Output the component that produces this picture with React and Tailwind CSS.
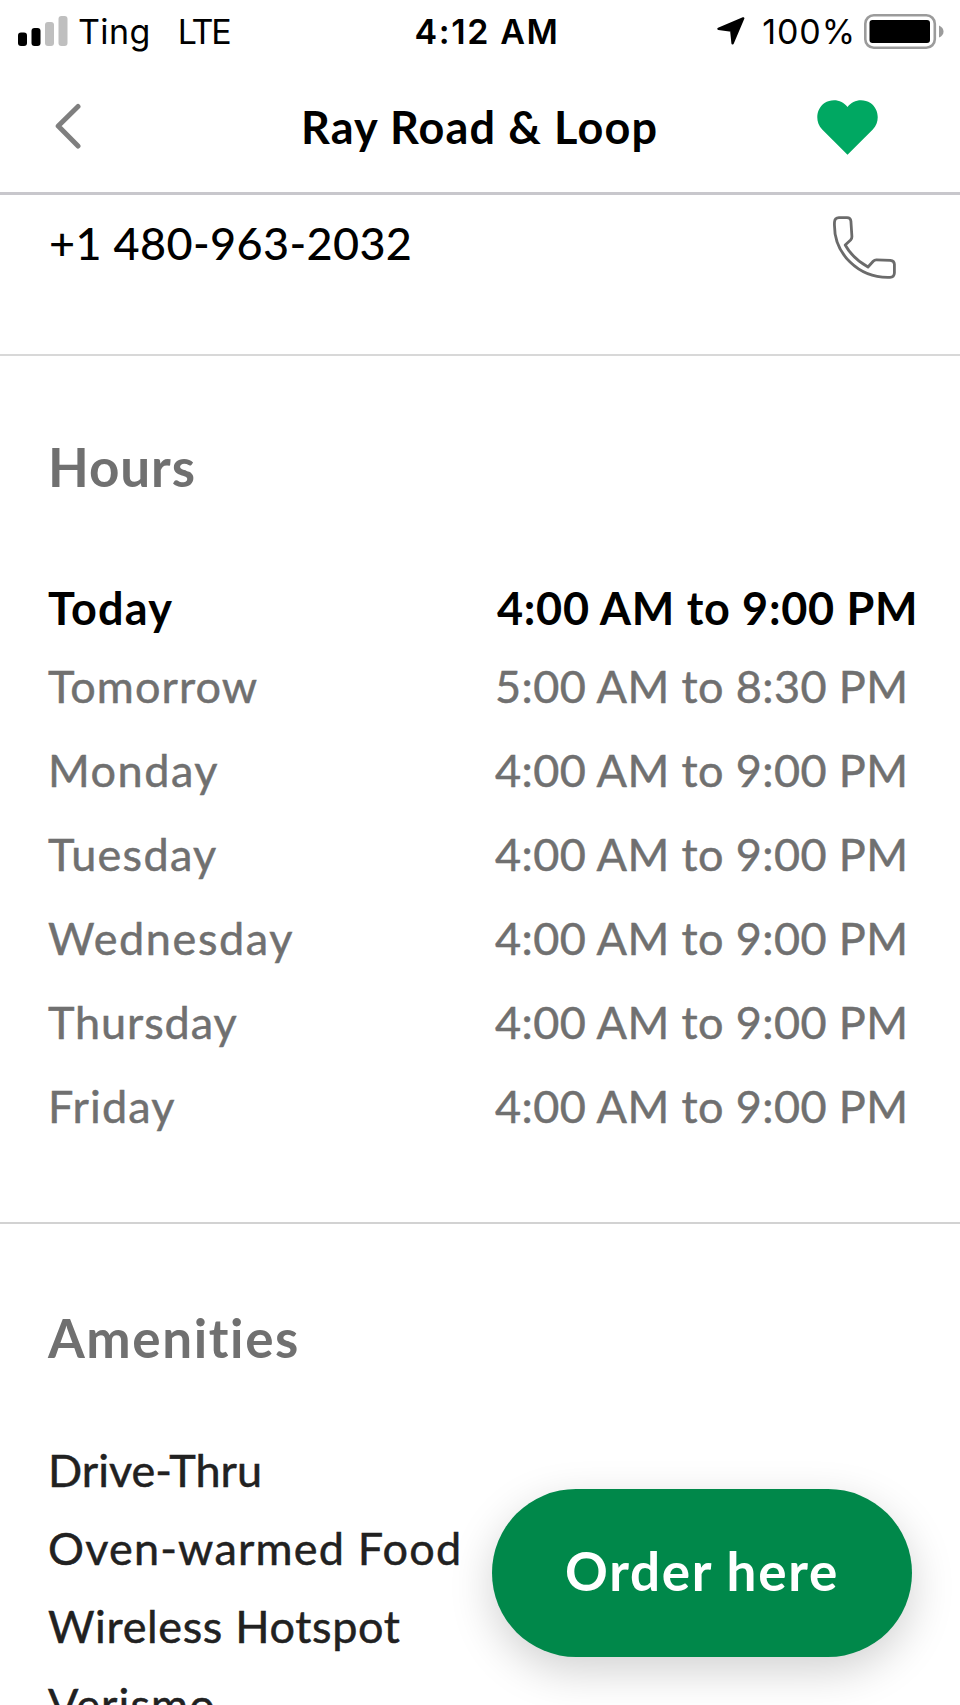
// src/App.jsx
import React from 'react';

const hours = [
  { day: 'Tomorrow', time: '5:00 AM to 8:30 PM', tracking: 'tracking-[1.1px]' },
  { day: 'Monday', time: '4:00 AM to 9:00 PM', tracking: 'tracking-[1.5px]' },
  { day: 'Tuesday', time: '4:00 AM to 9:00 PM', tracking: 'tracking-[1.3px]' },
  { day: 'Wednesday', time: '4:00 AM to 9:00 PM', tracking: 'tracking-[1.6px]' },
  { day: 'Thursday', time: '4:00 AM to 9:00 PM', tracking: 'tracking-[0.9px]' },
  { day: 'Friday', time: '4:00 AM to 9:00 PM', tracking: 'tracking-[1.1px]' },
];

const amenities = [
  { name: 'Drive-Thru', tracking: 'tracking-normal' },
  { name: 'Oven-warmed Food', tracking: 'tracking-[1.2px]' },
  { name: 'Wireless Hotspot', tracking: 'tracking-[0.65px]' },
  { name: 'Verismo', tracking: 'tracking-[1.1px]' },
];

function StatusBar() {
  return (
    <div className="grid h-[62px] grid-cols-3 items-center pl-[18px] pr-[16px] font-['Inter',sans-serif] text-[34px] leading-none text-black">
      <div className="flex items-center whitespace-nowrap">
        <svg className="h-[30px] w-[50px]" viewBox="0 0 50 30">
          <rect x="0" y="16.5" width="9" height="13.5" rx="3" fill="#000" />
          <rect x="13.5" y="12" width="9" height="18" rx="3" fill="#000" />
          <rect x="27" y="6" width="9" height="24" rx="3" fill="#bfbfbf" />
          <rect x="40.5" y="0" width="9" height="30" rx="3" fill="#bfbfbf" />
        </svg>
        <span className="ml-[10px] pt-px tracking-[0.4px]">Ting</span>
        <span className="ml-[27px] pt-px tracking-[-2.2px]">LTE</span>
      </div>
      <div className="pl-[12px] pt-px text-center font-semibold tracking-[1.6px]">4:12 AM</div>
      <div className="flex items-center justify-end">
        <svg className="mr-[17px] h-[28px] w-[28px]" viewBox="0 0 28 28">
          <path d="M26.2 1.4 L1.5 11.9 L14.3 13.6 L15.6 26.3 Z" fill="#000" stroke="#000" strokeWidth="2.4" strokeLinejoin="round" />
        </svg>
        <span className="pt-px tracking-[0.9px]">100%</span>
        <svg className="ml-[8px] h-[35px] w-[80px]" viewBox="0 0 80 35">
          <rect x="1.3" y="1.3" width="69.5" height="32.4" rx="8.5" fill="none" stroke="#9b9b9b" strokeWidth="2.6" />
          <rect x="5.5" y="6" width="60.5" height="23" rx="3" fill="#000" />
          <path d="M75 11.5 Q79.5 13.5 79.5 17.5 Q79.5 21.5 75 23.5 Z" fill="#9b9b9b" />
        </svg>
      </div>
    </div>
  );
}

function NavBar() {
  return (
    <header className="flex h-[133px] items-center border-b-[3px] border-[#c8c7cc] pl-[55px] pr-[82px]">
      <svg className="mb-[3px] h-[46px] w-[62px]" viewBox="0 0 62 46" fill="none">
        <path d="M23 3.5 L3.2 23 L23 43" stroke="#7f7f7f" strokeWidth="5" strokeLinecap="round" strokeLinejoin="round" />
      </svg>
      <h1 className="flex-1 pl-[184px] text-[45px] font-bold leading-[54px] tracking-[1.15px] text-black">Ray Road &amp; Loop</h1>
      <svg className="h-[55px] w-[61px]" viewBox="0 0 61 55">
        <path d="M30.5 54.7 L5.2 29.5 C-2.6 21.5 -0.6 8.5 7.5 3 C15 -2 25.5 -0.3 30.5 7 C35.5 -0.3 46 -2 53.5 3 C61.6 8.5 63.6 21.5 55.8 29.5 Z" fill="#00a862" />
      </svg>
    </header>
  );
}

export default function App() {
  return (
    <div className="relative h-[1705px] w-[960px] overflow-hidden bg-white font-['Lato',sans-serif] text-[45px] leading-[54px]">
      <StatusBar />
      <NavBar />

      <section className="flex h-[161px] items-start justify-between border-b-2 border-[#d8d8d8] pl-[49px] pr-[64px] pt-[21px]">
        <span className="font-medium tracking-[0.35px] text-black">+1 480-963-2032</span>
        <svg className="h-[63px] w-[63px]" viewBox="0 0 63 63" fill="none">
          <path
            d="M6 1.6 H14 Q17.6 1.6 17.9 5 L18.9 20.5 Q19 22.5 17.6 24 L12.2 29 Q19.5 42.3 35 51 L40.2 45.2 Q41.6 43.8 43.6 43.9 L57.3 44.4 Q61.3 44.9 61.4 48.2 V57 Q61.2 61.3 57 61.4 C26 62.5 0 38 1.5 6 Q1.8 1.8 6 1.6 Z"
            stroke="#6b6b6b"
            strokeWidth="2.8"
            strokeLinejoin="round"
          />
        </svg>
      </section>

      <section className="h-[868px] border-b-2 border-[#d2d2d2] pt-[79px]">
        <h2 className="pl-[48px] text-[53px] font-bold leading-[64px] tracking-[0.9px] text-[#707070]">Hours</h2>
        <div className="mt-[72px] grid h-[73px] grid-cols-[449px_1fr] items-center whitespace-nowrap pl-[48px] font-bold text-black">
          <span className="tracking-[1.3px]">Today</span>
          <span className="tracking-[0.7px]">4:00 AM to 9:00 PM</span>
        </div>
        {hours.map((row) => (
          <div key={row.day} className="grid h-[84px] grid-cols-[447px_1fr] items-center whitespace-nowrap pl-[48px] text-[#707070] [-webkit-text-stroke:0.5px]">
            <span className={row.tracking}>{row.day}</span>
            <span className="tracking-[0.4px]">{row.time}</span>
          </div>
        ))}
      </section>

      <section className="pl-[48px] pt-[82px]">
        <h2 className="text-[53px] font-bold leading-[64px] tracking-[1.6px] text-[#707070]">Amenities</h2>
        <ul className="mt-[61px] text-[#212121] [-webkit-text-stroke:0.5px]">
          {amenities.map((item) => (
            <li key={item.name} className="flex h-[78px] items-center">
              <span className={item.tracking}>{item.name}</span>
            </li>
          ))}
        </ul>
      </section>

      {/* floating order button */}
      <button className="absolute left-[492px] top-[1489px] h-[168px] w-[420px] rounded-full bg-[#00884a] pb-[5px] text-[53px] font-bold tracking-[1.7px] text-white shadow-[0_14px_44px_rgba(0,0,0,0.18)]">
        Order here
      </button>
    </div>
  );
}
